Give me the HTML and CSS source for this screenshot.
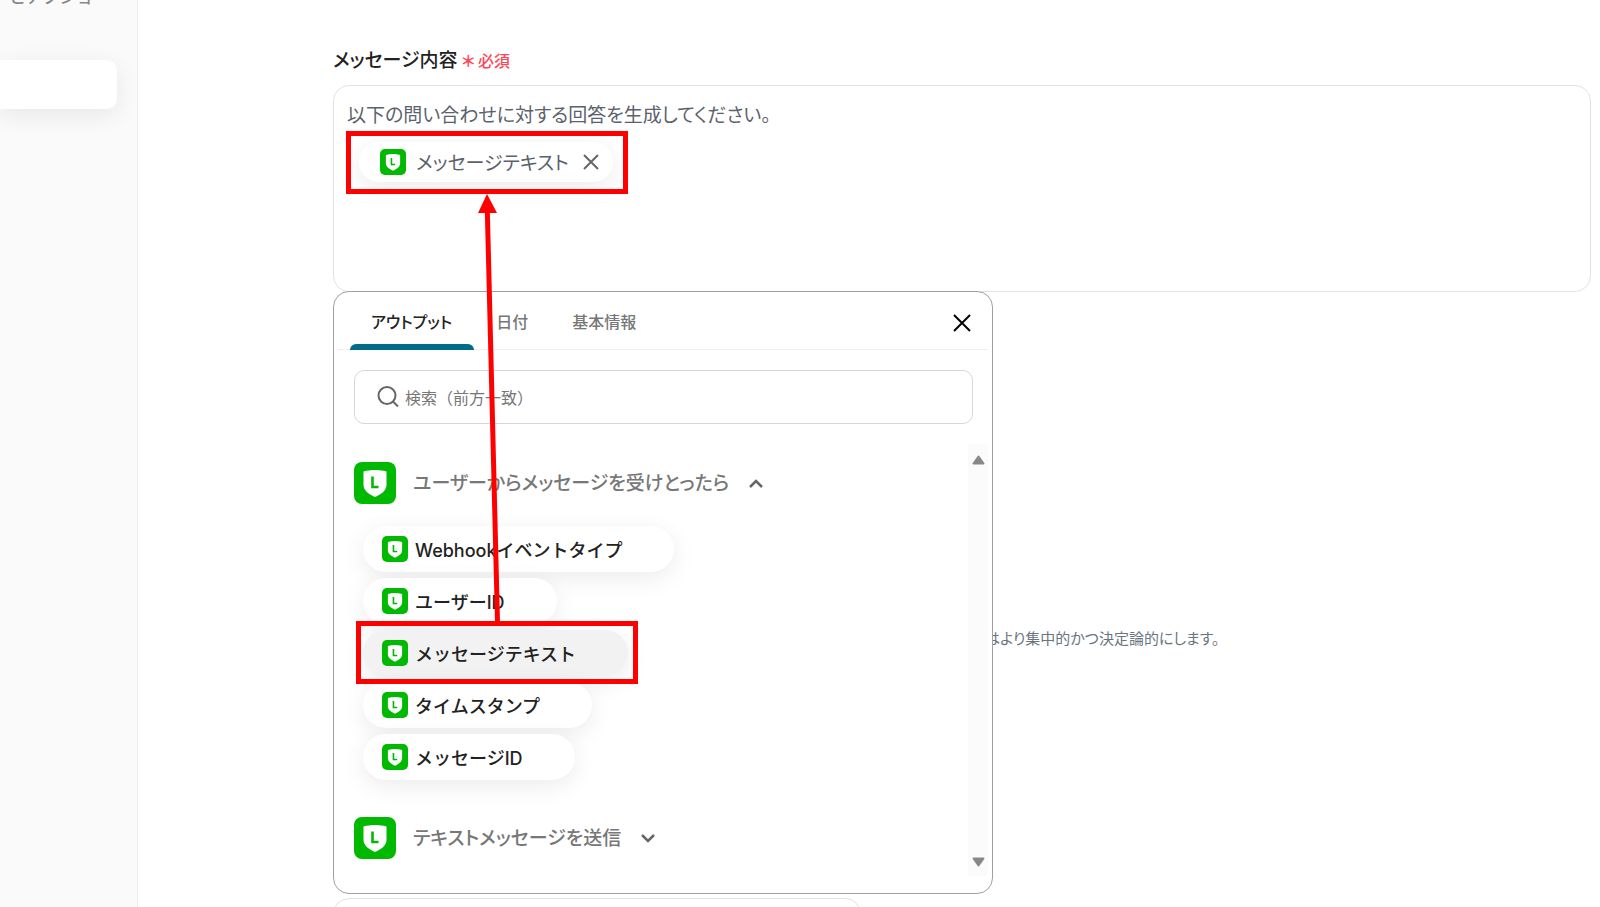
FILE: index.html
```html
<!DOCTYPE html>
<html lang="ja">
  <head>
    <meta charset="UTF-8" />
    <meta name="viewport" content="width=device-width, initial-scale=1.0" />
    <title>メッセージ内容</title>
    <link rel="stylesheet" href="styles.css" />
  </head>
  <body>
    <!-- Shared icons -->
    <svg class="sprite" aria-hidden="true">
      <symbol id="line-logo" viewBox="0 0 42 42">
        <rect width="42" height="42" rx="8" fill="#00b900" />
        <path d="M21 8c4 0 8 .5 11.500 1.500v13.500c0 5.500-5.500 9.500-11.500 12-6-2.500-11.500-6.500-11.500-12V9.500C13 8.500 17 8 21 8z" fill="#fff" />
        <path d="M18.500 14.500v10.500h6" fill="none" stroke="#00b900" stroke-width="2.600" />
      </symbol>
    </svg>

    <div class="layout">
      <aside class="sidebar">
        <p class="sidebar-title">とアクショ</p>
        <div class="sidebar-item"></div>
      </aside>

      <main class="content">
        <h2 class="field-label" id="message-label">
          メッセージ内容 <span class="required"><span class="asterisk">＊</span>必須</span>
        </h2>

        <div class="field">
          <div class="editor" role="textbox" aria-labelledby="message-label">
            <p class="editor-text">以下の問い合わせに対する回答を生成してください。</p>
            <div class="token">
              <svg class="icon-small"><use href="#line-logo" /></svg>
              <span>メッセージテキスト</span>
              <button class="token-remove" type="button" aria-label="削除">
                <svg viewBox="0 0 16 16"><path d="M1 1l14 14M15 1L1 15" /></svg>
              </button>
            </div>
          </div>

          <section class="picker">
            <div class="tabs">
              <button class="tab active" type="button">アウトプット</button>
              <button class="tab" type="button">日付</button>
              <button class="tab" type="button">基本情報</button>
              <button class="picker-close" type="button" aria-label="閉じる">
                <svg viewBox="0 0 18 18"><path d="M1 1l16 16M17 1L1 17" /></svg>
              </button>
            </div>

            <div class="search">
              <svg viewBox="0 0 22 22"><circle cx="10" cy="9.500" r="8.500" /><path d="M16 15.500l5 5" /></svg>
              <input type="text" placeholder="検索（前方一致）" aria-label="検索" />
            </div>

            <div class="picker-body">
              <div class="groups">
                <button class="group" type="button">
                  <svg class="icon-large"><use href="#line-logo" /></svg>
                  <span>ユーザーからメッセージを受けとったら</span>
                  <svg class="chevron" viewBox="0 0 16 10"><path d="M2 9l6-6 6 6" /></svg>
                </button>
                <div class="options">
                  <button class="option" type="button"><svg class="icon-small"><use href="#line-logo" /></svg>Webhookイベントタイプ</button>
                  <button class="option" type="button"><svg class="icon-small"><use href="#line-logo" /></svg>ユーザーID</button>
                  <button class="option selected" type="button"><svg class="icon-small"><use href="#line-logo" /></svg>メッセージテキスト</button>
                  <button class="option" type="button"><svg class="icon-small"><use href="#line-logo" /></svg>タイムスタンプ</button>
                  <button class="option" type="button"><svg class="icon-small"><use href="#line-logo" /></svg>メッセージID</button>
                </div>
                <button class="group" type="button">
                  <svg class="icon-large"><use href="#line-logo" /></svg>
                  <span>テキストメッセージを送信</span>
                  <svg class="chevron" viewBox="0 0 16 10"><path d="M2 2l6 6 6-6" /></svg>
                </button>
              </div>
              <div class="scrollbar">
                <svg viewBox="0 0 13 10"><path d="M6.500 1.500L11.500 8.500H1.500z" /></svg>
                <svg viewBox="0 0 13 10"><path d="M6.500 8.500L11.500 1.500H1.500z" /></svg>
              </div>
            </div>
          </section>
        </div>

        <p class="help">はより集中的かつ決定論的にします。</p>
        <input class="next-input" type="text" aria-label="値" />
      </main>
    </div>

    <!-- Guide marks: which option fills the field -->
    <div class="mark mark-target"></div>
    <div class="mark mark-source"></div>
    <svg class="arrow" viewBox="0 0 30 428">
      <path d="M20.500 428L10.300 16" stroke="#f00" stroke-width="5" />
      <path d="M10 0L20 19H1z" fill="#f00" />
    </svg>
  </body>
</html>
```
FILE: styles.css
```css
* {
  box-sizing: border-box;
}
body {
  margin: 0;
  font-family: "Noto Sans CJK JP", sans-serif;
  background-color: #fff;
  color: #222;
}
h2,
p {
  margin: 0;
}
button {
  padding: 0;
  border: none;
  background: none;
  font-family: inherit;
  cursor: pointer;
}
svg {
  flex: none;
}
.sprite {
  display: none;
}
.layout {
  display: flex;
  height: 100vh;
  overflow: hidden;
}

/* Sidebar */
.sidebar {
  flex: none;
  width: 138px;
  border-right: 1px solid #eee;
  background-color: #fafafa;
  overflow: hidden;
}
.sidebar-title {
  height: 5px;
  margin-bottom: 55px;
  padding-left: 9px;
  display: flex;
  align-items: flex-end;
  font-size: 17px;
  line-height: 18px;
  font-weight: 500;
  color: #888;
}
.sidebar-item {
  height: 49px;
  margin-right: 20px;
  border-radius: 0 10px 10px 0;
  background-color: #fff;
  box-shadow: 0 6px 24px rgba(0, 0, 0, 0.08);
}

/* Message field */
.content {
  flex: 1;
  padding: 45px 9px 0 195px;
}
.field-label {
  font-size: 19px;
  line-height: 28px;
  font-weight: 500;
  font-feature-settings: "palt";
  margin-bottom: 12px;
}
.required {
  font-size: 16px;
  line-height: 16px;
  color: #ff4658;
}
.asterisk {
  margin-right: 3px;
  font-weight: 700;
}
.field {
  position: relative;
}
.editor {
  height: 207px;
  padding: 14px 13px;
  border: 1px solid #dfe3e7;
  border-radius: 16px;
  font-size: 19px;
  line-height: 28px;
  font-feature-settings: "palt";
  color: #5b626b;
}
.token {
  display: inline-flex;
  align-items: center;
  gap: 10px;
  height: 40px;
  margin: 14px 0 0 12px;
  padding: 0 14px 0 21px;
  border-radius: 20px;
  background-color: #fff;
  box-shadow: 0 6px 24px rgba(0, 0, 0, 0.08);
}
.token-remove {
  display: flex;
  margin-left: 4px;
}
.token-remove svg {
  width: 16px;
  height: 16px;
  stroke: #666;
  stroke-width: 2;
}
.icon-small {
  width: 26px;
  height: 26px;
}
.icon-large {
  width: 42px;
  height: 42px;
}

/* Output picker */
.picker {
  position: absolute;
  top: 100%;
  left: 0;
  width: 660px;
  margin-top: -1px;
  padding: 4px;
  border: 1px solid #a0a0a0;
  border-radius: 16px;
  background-color: #fff;
}
.tabs {
  display: flex;
  align-items: center;
  gap: 1px;
  height: 54px;
  padding: 0 17px 0 12px;
  border-bottom: 1px solid #eee;
}
.tab {
  height: 54px;
  padding: 0 22px 4px 21px;
  font-size: 16px;
  font-weight: 500;
  font-feature-settings: "palt";
  color: #777;
}
.tab.active {
  position: relative;
  color: #222;
}
.tab.active::after {
  content: "";
  position: absolute;
  left: 0;
  right: 0;
  bottom: 0;
  height: 6px;
  border-radius: 6px 6px 0 0;
  background-color: #036c85;
}
.picker-close {
  display: flex;
  margin-left: auto;
}
.picker-close svg {
  width: 18px;
  height: 18px;
  stroke: #000;
  stroke-width: 2;
}
.search {
  display: flex;
  align-items: center;
  gap: 6px;
  height: 54px;
  margin: 20px 15px 20px 16px;
  padding: 0 22px;
  border: 1px solid #d8d8d8;
  border-radius: 10px;
}
.search svg {
  width: 22px;
  height: 22px;
  fill: none;
  stroke: #666;
  stroke-width: 2;
}
.search input {
  flex: 1;
  padding: 0;
  border: none;
  outline: none;
  font-family: inherit;
  font-size: 16px;
}
.search input::placeholder {
  color: #777;
}
.picker-body {
  display: flex;
  height: 432px;
  margin-bottom: 13px;
}
.groups {
  flex: 1;
  padding: 18px 16px 0;
}
.group {
  display: flex;
  align-items: center;
  gap: 17px;
  font-size: 19px;
  font-weight: 500;
  font-feature-settings: "palt";
  color: #777;
}
.group span {
  padding-bottom: 3px;
}
.chevron {
  width: 16px;
  height: 10px;
  margin-left: 2px;
  fill: none;
  stroke: #666;
  stroke-width: 2.5;
}
.options {
  display: flex;
  flex-direction: column;
  align-items: flex-start;
  gap: 6px;
  padding: 22px 9px 37px;
}
.option {
  display: flex;
  align-items: center;
  gap: 7px;
  height: 46px;
  padding: 0 52px 0 19px;
  border-radius: 23px;
  background-color: #fff;
  box-shadow: 0 6px 24px rgba(0, 0, 0, 0.08);
  font-family: Inter, "Noto Sans CJK JP", sans-serif;
  font-size: 18px;
  font-weight: 500;
  color: #222;
}
.option.selected {
  background-color: #f2f2f2;
}
.scrollbar {
  display: flex;
  flex-direction: column;
  justify-content: space-between;
  align-items: center;
  width: 20px;
  padding: 11px 0 9px;
  background-color: #fbfbfb;
}
.scrollbar svg {
  width: 13px;
  height: 10px;
  fill: #888;
  stroke: #888;
  stroke-width: 2;
  stroke-linejoin: round;
}

.help {
  margin: 334px 0 248px 652px;
  font-size: 15px;
  line-height: 24px;
  font-feature-settings: "palt";
  color: #6b7580;
}
.next-input {
  display: block;
  width: 528px;
  height: 54px;
  border: 1px solid #dfe3e7;
  border-radius: 16px;
}

/* Guide marks */
.mark {
  position: absolute;
  width: 282px;
  height: 63px;
  border: 5px solid #f00;
}
.mark-target {
  top: 131px;
  left: 346px;
}
.mark-source {
  top: 621px;
  left: 356px;
}
.arrow {
  position: absolute;
  top: 194px;
  left: 477px;
  width: 30px;
  height: 428px;
}
```
